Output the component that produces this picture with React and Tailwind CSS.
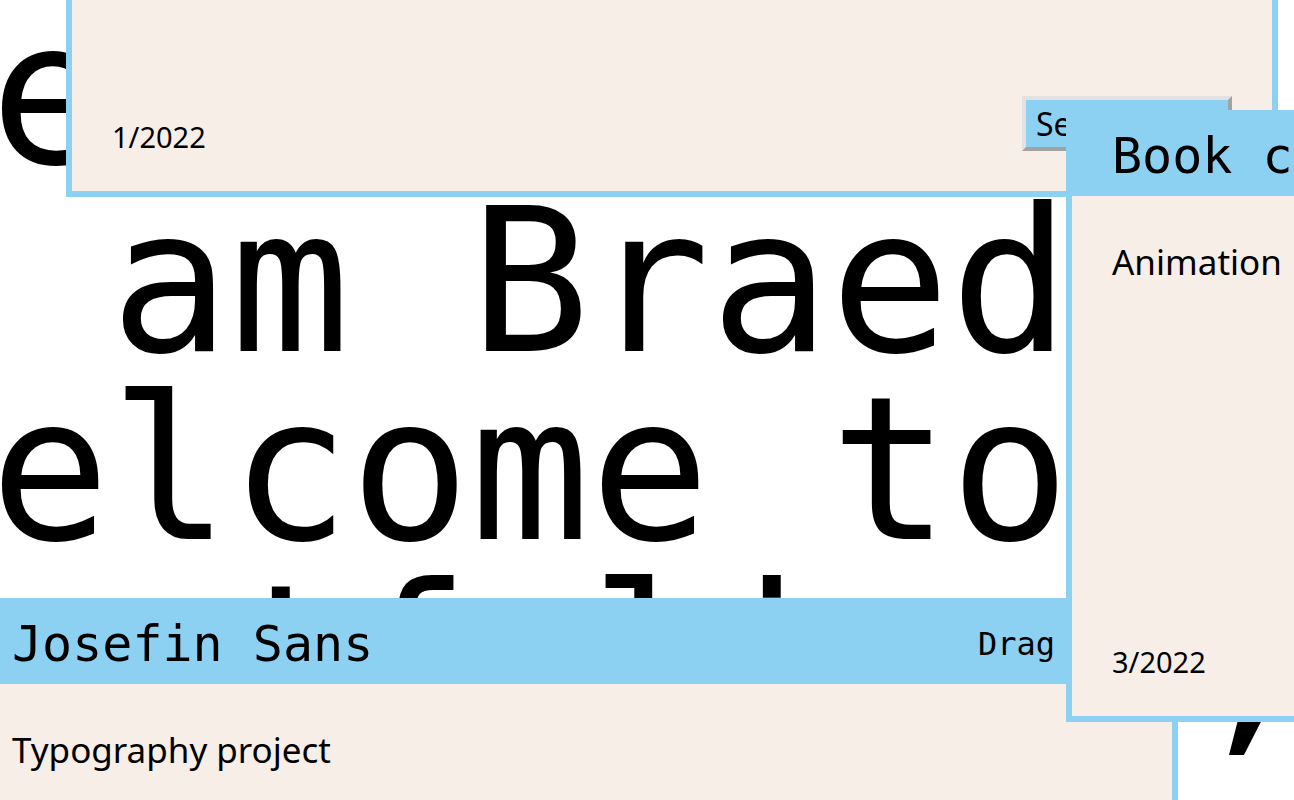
import React from "react";

const projects = [
  {
    id: "dot",
    title: "Spot the Dot",
    kind: "Web design",
    date: "1/2022",
    pos: "left-[66px] top-[-415px]",
  },
  {
    id: "josefin",
    title: "Josefin Sans",
    kind: "Typography project",
    date: "2/2022",
    pos: "left-[-34px] top-[598px]",
  },
  {
    id: "book",
    title: "Book cover",
    kind: "Animation",
    date: "3/2022",
    pos: "left-[1066px] top-[110px]",
  },
];

function ProjectWindow({ project }) {
  return (
    <div
      className={`absolute ${project.pos} flex h-[612px] w-[1212px] flex-col border-[6px] border-[#8dd1f2] bg-[#f7eee8]`}
    >
      {/* barra de arrastre */}
      <div className="flex h-[80px] shrink-0 items-center justify-between bg-[#8dd1f2] px-[40px] font-['DejaVu_Sans_Mono',monospace] text-black">
        <h2 className="text-[50px] leading-none">{project.title}</h2>
        <span className="text-[32px] leading-none">Drag me!</span>
      </div>

      <div className="flex flex-1 flex-col justify-between p-[40px] font-['Noto_Sans',sans-serif] text-black">
        <p className="text-[35px]">{project.kind}</p>
        <div className="flex items-end justify-between">
          <span className="text-[29px] leading-none">{project.date}</span>
          <button
            type="button"
            className="flex h-[55px] w-[210px] items-center border-4 border-t-[#e2e2e2] border-l-[#e2e2e2] border-r-[#a2a2a2] border-b-[#a2a2a2] bg-[#8dd1f2] pl-[10px] text-left text-[32px] leading-none"
          >
            See project
          </button>
        </div>
      </div>
    </div>
  );
}

export default function App() {
  return (
    <div className="relative h-screen w-full overflow-hidden bg-white">
      <h1 className="-ml-[130px] whitespace-pre font-['DejaVu_Sans_Mono',monospace] text-[199.3px] font-normal leading-[188px] text-black">
        <div>Hello,</div>
        <div>I am Braeden,</div>
        <div>Welcome to my</div>
        <div>{"portfolio  ,"}</div>
      </h1>

      {projects.map((p) => (
        <ProjectWindow key={p.id} project={p} />
      ))}
    </div>
  );
}
